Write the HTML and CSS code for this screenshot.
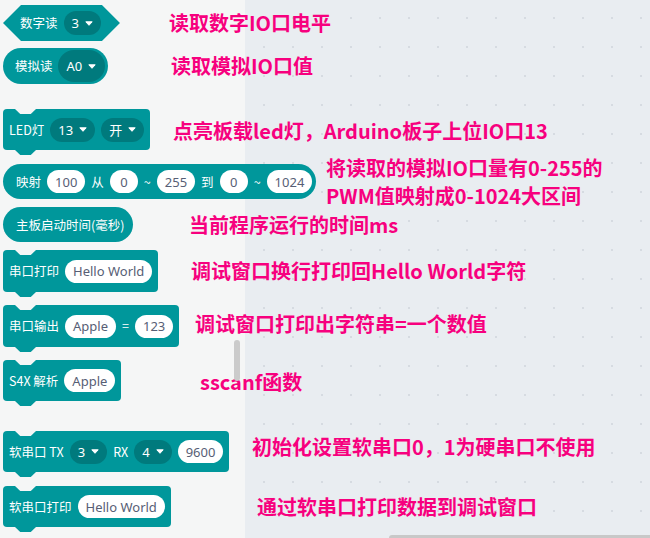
FILE: index.html
```html
<!DOCTYPE html>
<html lang="zh-CN">
<head>
<meta charset="utf-8">
<title>Mixly blocks</title>
<link rel="stylesheet" href="styles.css">
</head>
<body>
<div class="page">
  <div class="rows">
    <div class="row r1">
      <div class="block hex">
        <span class="label">数字读</span>
        <span class="dd">3<svg class="tri" width="8" height="5" viewBox="0 0 8 5"><path d="M0.8 0.8H7.2L4 4.3Z"/></svg></span>
      </div>
      <div class="note">读取数字IO口电平</div>
    </div>
    <div class="row r2">
      <div class="block pill pill-a">
        <span class="label">模拟读</span>
        <span class="dd dd-tall">A0<svg class="tri" width="8" height="5" viewBox="0 0 8 5"><path d="M0.8 0.8H7.2L4 4.3Z"/></svg></span>
      </div>
      <div class="note">读取模拟IO口值</div>
    </div>
    <div class="row r3">
      <div class="block stmt">
        <span class="label">LED灯</span>
        <span class="dd">13<svg class="tri" width="8" height="5" viewBox="0 0 8 5"><path d="M0.8 0.8H7.2L4 4.3Z"/></svg></span>
        <span class="dd">开<svg class="tri" width="8" height="5" viewBox="0 0 8 5"><path d="M0.8 0.8H7.2L4 4.3Z"/></svg></span>
      </div>
      <div class="note">点亮板载led灯，Arduino板子上位IO口13</div>
    </div>
    <div class="row r4">
      <div class="block pill pill-map">
        <span class="label">映射</span>
        <span class="field">100</span>
        <span class="label">从</span>
        <span class="field">0</span>
        <span class="label">~</span>
        <span class="field">255</span>
        <span class="label">到</span>
        <span class="field">0</span>
        <span class="label">~</span>
        <span class="field">1024</span>
      </div>
      <div class="note note-two"><span class="line">将读取的模拟IO口量有0-255的</span><span class="line">PWM值映射成0-1024大区间</span></div>
    </div>
    <div class="row r5">
      <div class="block pill pill-time">
        <span class="label">主板启动时间(毫秒)</span>
      </div>
      <div class="note">当前程序运行的时间ms</div>
    </div>
    <div class="row r6">
      <div class="block stmt">
        <span class="label">串口打印</span>
        <span class="field">Hello World</span>
      </div>
      <div class="note">调试窗口换行打印回Hello World字符</div>
    </div>
    <div class="row r7">
      <div class="block stmt">
        <span class="label">串口输出</span>
        <span class="field">Apple</span>
        <span class="label">=</span>
        <span class="field">123</span>
      </div>
      <div class="note">调试窗口打印出字符串=一个数值</div>
    </div>
    <div class="row r8">
      <div class="block stmt">
        <span class="label">S4X 解析</span>
        <span class="field">Apple</span>
      </div>
      <div class="note">sscanf函数</div>
    </div>
    <div class="row r9">
      <div class="block stmt">
        <span class="label">软串口 TX</span>
        <span class="dd">3<svg class="tri" width="8" height="5" viewBox="0 0 8 5"><path d="M0.8 0.8H7.2L4 4.3Z"/></svg></span>
        <span class="label">RX</span>
        <span class="dd">4<svg class="tri" width="8" height="5" viewBox="0 0 8 5"><path d="M0.8 0.8H7.2L4 4.3Z"/></svg></span>
        <span class="field">9600</span>
      </div>
      <div class="note">初始化设置软串口0，1为硬串口不使用</div>
    </div>
    <div class="row r10">
      <div class="block stmt">
        <span class="label">软串口打印</span>
        <span class="field">Hello World</span>
      </div>
      <div class="note">通过软串口打印数据到调试窗口</div>
    </div>
  </div>
  <div class="vscroll"></div>
  <div class="hscroll"></div>
</div>
</body>
</html>
```
FILE: styles.css
```css
html, body {
  margin: 0;
  padding: 0;
}
body {
  width: 650px;
  height: 538px;
  overflow: hidden;
  font-family: "Noto Sans CJK SC", "Noto Sans", sans-serif;
}
.page {
  position: relative;
  width: 650px;
  height: 538px;
  overflow: hidden;
  background-color: #e9edf1;
  background-image:
    linear-gradient(to right, #f5f6f6 0, #f5f6f6 245px, transparent 245px),
    radial-gradient(circle at 1px 1px, #d6dbe1 0, #d6dbe1 1px, transparent 1.4px);
  background-size: 100% 100%, 29px 29px;
  background-repeat: no-repeat, repeat;
  background-position: 0 0, 263px 17px;
}
.rows {
  display: flex;
  flex-direction: column;
  padding: 5px 0 0 3px;
}
.row {
  display: grid;
  grid-template-columns: var(--c) auto;
  align-items: center;
}
.r1 { --c: 166px; }
.r2 { --c: 168px; margin-top: 7px; }
.r3 { --c: 170px; margin-top: 25px; }
.r4 { --c: 323px; margin-top: 14px; }
.r5 { --c: 186px; margin-top: 8px; }
.r6 { --c: 188px; margin-top: 8px; }
.r7 { --c: 192px; margin-top: 13px; }
.r8 { --c: 197px; margin-top: 13px; }
.r9 { --c: 249px; margin-top: 30px; }
.r10 { --c: 254px; margin-top: 14px; }

.block {
  justify-self: start;
  position: relative;
  display: flex;
  align-items: center;
  gap: 6px;
  background: #00979b;
  color: #fff;
  font-size: 12.5px;
  box-sizing: border-box;
  white-space: nowrap;
}
.label {
  line-height: 16px;
}
.hex {
  height: 36px;
  padding: 0 19px 0 17px;
  clip-path: polygon(18px 0, calc(100% - 18px) 0, 100% 50%, calc(100% - 18px) 100%, 18px 100%, 0 50%);
}
.pill {
  height: 36px;
  border-radius: 18px;
}
.pill-a {
  padding: 0 3px 0 12px;
  gap: 5px;
}
.pill-map {
  height: 35px;
  padding: 0 4px 0 13px;
}
.pill-time {
  height: 35px;
  padding: 0 9px 0 13px;
}
.stmt {
  height: 41px;
  padding: 0 6px;
  border-radius: 4px;
}
.r6 .stmt, .r7 .stmt { height: 42px; }
.stmt::before,
.stmt::after {
  content: "";
  position: absolute;
  left: 12px;
  width: 21px;
  height: 5px;
  clip-path: polygon(0 0, 100% 0, 75% 100%, 25% 100%);
}
.stmt::before {
  top: 0;
  background: #f5f6f6;
}
.stmt::after {
  top: 100%;
  background: #00979b;
}
.dd {
  display: inline-flex;
  align-items: center;
  gap: 6px;
  height: 24px;
  padding: 0 8px;
  border-radius: 12px;
  background: #007a7d;
  color: #fff;
  font-family: "Noto Sans", "Noto Sans CJK SC", sans-serif;
  font-size: 13px;
}
.dd-tall {
  height: 32px;
  border-radius: 16px;
  padding: 0 9px;
}
.tri path {
  fill: #fff;
  stroke: #fff;
  stroke-width: 1;
  stroke-linejoin: round;
}
.field {
  display: inline-flex;
  align-items: center;
  justify-content: center;
  box-sizing: border-box;
  min-width: 28px;
  height: 23px;
  padding: 0 8px;
  border-radius: 12px;
  background: #fff;
  color: #575e75;
  font-family: "Noto Sans", sans-serif;
  font-size: 13px;
}
.note {
  color: #f7007e;
  font-family: "Noto Sans CJK SC", sans-serif;
  font-weight: 700;
  font-size: 20px;
  line-height: 26px;
  white-space: nowrap;
}
.note-two {
  display: flex;
  flex-direction: column;
  gap: 2px;
  margin: -10px 0;
}
.r3 .note { margin-top: 2px; }
.r7 .note { margin-bottom: 5px; }
.r8 .note { margin-top: 3px; }
.r9 .note { margin-bottom: 9px; }

.vscroll {
  position: absolute;
  left: 234px;
  top: 340px;
  width: 6px;
  height: 41px;
  border-radius: 3px;
  background: #cbcbcb;
}
.hscroll {
  position: absolute;
  left: 389px;
  top: 535px;
  width: 270px;
  height: 6px;
  border-radius: 3px;
  background: #c8c8c8;
}
```
